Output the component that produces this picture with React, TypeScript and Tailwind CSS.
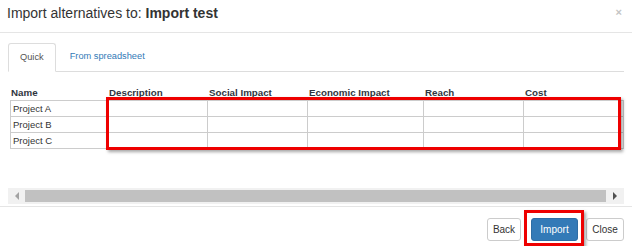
import React from 'react';

const columns = [
  { label: 'Name', width: 'w-[98px]' },
  { label: 'Description', width: 'w-[100px]' },
  { label: 'Social Impact', width: 'w-[100px]' },
  { label: 'Economic Impact', width: 'w-[116px]' },
  { label: 'Reach', width: 'w-[100px]' },
  { label: 'Cost', width: 'w-[100px]' },
];

const rows = ['Project A', 'Project B', 'Project C'];

export default function App() {
  return (
    <div className="w-[632px] h-[246px] bg-white text-[#333] font-['Liberation_Sans',Arial,sans-serif] overflow-hidden">
      {/* header */}
      <div className="h-[33px] border-b border-[#e5e5e5] flex items-start justify-between pl-[7px] pr-[10px] pt-[5px]">
        <h4 className="text-[14px] leading-[16px]">
          Import alternatives to: <span className="font-bold">Import test</span>
        </h4>
        <span className="text-[11px] leading-[12px] font-bold text-[#c4c4c4] mt-[1px]">×</span>
      </div>

      {/* body */}
      <div className="h-[173px] px-[8px] pt-[10px] flex flex-col">
        <div className="flex h-[29px] border-b border-[#ddd] text-[9.25px]">
          <div className="-mb-px h-[29px] px-[11px] flex items-center border border-[#ddd] border-b-white rounded-t-[3px] bg-white text-[#555]">
            Quick
          </div>
          <div className="ml-[2px] px-[12px] flex items-center text-[#337ab7]">From spreadsheet</div>
        </div>

        <div className="relative ml-[2px] mt-[14px]">
          <div className="flex h-[14px] items-center text-[9.75px] font-bold text-[#2f3540]">
            {columns.map((c) => (
              <div key={c.label} className={`${c.width} shrink-0 pl-[1px]`}>
                {c.label}
              </div>
            ))}
          </div>
          <div className="border-t border-[#ccc]">
            {rows.map((r) => (
              <div key={r} className="flex h-[16px]">
                {columns.map((c, i) => (
                  <div
                    key={c.label}
                    className={`${c.width} shrink-0 border-b border-r border-[#ccc] text-[9.5px] leading-[15px] pl-[2px] ${i === 0 ? 'border-l' : ''}`}
                  >
                    {i === 0 ? r : ''}
                  </div>
                ))}
              </div>
            ))}
          </div>
          {/* annotation box */}
          <div className="absolute left-[96px] top-[11px] w-[515px] h-[53px] border-[3px] border-[#ee0000] shadow-[2px_2px_3px_rgba(0,0,0,0.35)]" />
        </div>

        {/* horizontal scrollbar */}
        <div className="mt-auto mb-[2px] h-[16px] bg-[#f1f1f1] flex items-center">
          <div className="w-[17px] flex justify-center">
            <div className="w-0 h-0 border-y-[4px] border-y-transparent border-r-[4px] border-r-[#a3a3a3]" />
          </div>
          <div className="flex-1 h-[12px] bg-[#c1c1c1]" />
          <div className="w-[18px] flex justify-center">
            <div className="w-0 h-0 border-y-[4px] border-y-transparent border-l-[4px] border-l-[#505050]" />
          </div>
        </div>
      </div>

      {/* footer */}
      <div className="h-[40px] border-t border-[#e5e5e5] flex justify-end items-start pt-[11px] pr-[8px] text-[10px]">
        <button className="h-[23px] w-[34px] rounded-[3px] border border-[#ccc] bg-white text-[#333]">Back</button>
        <div className="relative ml-[10px]">
          <button className="h-[23px] w-[47px] rounded-[3px] border border-[#2e6da4] bg-[#337ab7] text-white">Import</button>
          <div className="absolute -left-[7px] -top-[8px] w-[60px] h-[36px] border-[3px] border-[#ee0000] shadow-[2px_2px_3px_rgba(0,0,0,0.35)]" />
        </div>
        <button className="ml-[8px] h-[23px] w-[38px] rounded-[3px] border border-[#ccc] bg-white text-[#333]">Close</button>
      </div>
    </div>
  );
}
